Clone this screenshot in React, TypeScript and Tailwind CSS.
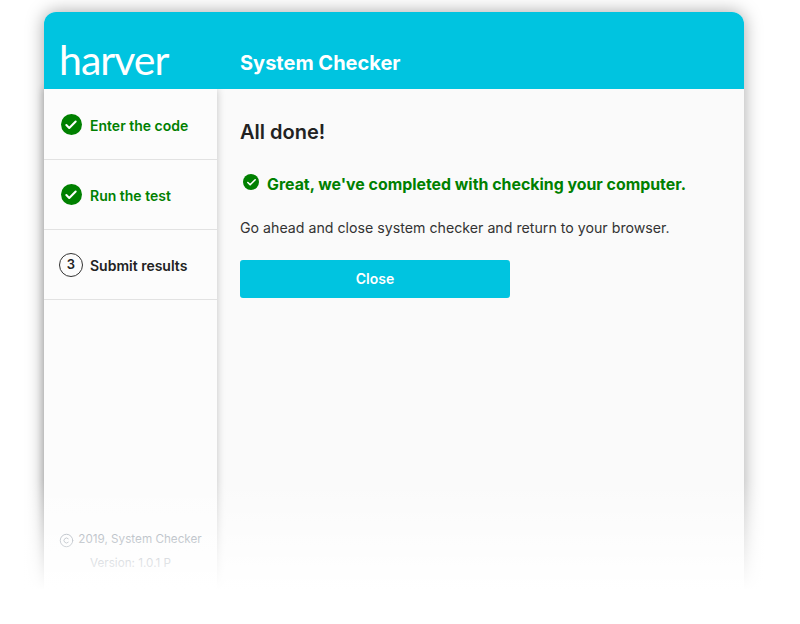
import { Check, Copyright } from "lucide-react";

const FONT = "font-['Inter','Liberation_Sans',sans-serif]";

function DoneIcon({ size }: { size: "lg" | "sm" }) {
  const box = size === "lg" ? "w-[21px] h-[21px]" : "w-4 h-4";
  return (
    <span className={`${box} rounded-full bg-[#008000] flex items-center justify-center shrink-0`}>
      <Check className={size === "lg" ? "w-[14px] h-[14px] text-white" : "w-[11px] h-[11px] text-white"} strokeWidth={3.5} />
    </span>
  );
}

function Step({ label, done, num }: { label: string; done?: boolean; num?: number }) {
  return (
    <div className="h-[70px] flex items-center gap-[7px] pl-[15px] border-b border-[#e2e2e2]">
      <span className="w-[24px] flex justify-center shrink-0">
        {done ? (
          <DoneIcon size="lg" />
        ) : (
          <span className="w-[24px] h-[24px] rounded-full border border-[#333] flex items-center justify-center text-[13px] font-semibold text-[#222]">
            {num}
          </span>
        )}
      </span>
      <span className={`mt-[2px] text-[14px] font-semibold ${done ? "text-[#008000]" : "text-[#222]"}`}>{label}</span>
    </div>
  );
}

export default function App() {
  return (
    <div className={`relative h-[624px] w-[800px] bg-white overflow-hidden pt-3 pl-[44px] pr-[56px] ${FONT}`}>
      <div className="h-[640px] rounded-t-[12px] bg-[#fafafa] shadow-[0_0_18px_rgba(0,0,0,0.35)] flex flex-col">
        {/* Header */}
        <div className="h-[77px] shrink-0 rounded-t-[12px] bg-[#00c4e0] flex items-end relative z-10">
          <div className="w-[173px] pl-[15px] pb-[6px] h-full flex items-end">
            <span className="font-['Lato',sans-serif] font-normal text-[41px] leading-[46px] tracking-[-1px] text-white">harver</span>
          </div>
          <div className="pl-[23px] pb-[13px] text-[20px] leading-[26px] font-bold text-white">System Checker</div>
        </div>

        <div className="flex flex-1">
          {/* Sidebar */}
          <div className="w-[173px] h-[551px] shrink-0 bg-[#fcfcfc] shadow-[0_0_8px_rgba(0,0,0,0.22)] flex flex-col pt-px">
            <Step label="Enter the code" done />
            <Step label="Run the test" done />
            <Step label="Submit results" num={3} />
            <div className="mt-auto pb-[64px] flex flex-col items-center text-[11.7px] text-[#7f8a96]">
              <div className="flex items-center gap-[4px] h-[24px]">
                <Copyright className="w-[15px] h-[15px]" strokeWidth={1.5} />
                <span>2019, System Checker</span>
              </div>
              <div className="h-[24px] flex items-center">Version: 1.0.1 P</div>
            </div>
          </div>

          {/* Content */}
          <div className="flex-1 pl-[23px] pt-[30px]">
            <h1 className="text-[20px] leading-[26px] font-semibold text-[#222]">All done!</h1>
            <div className="mt-[29px] ml-[3px] flex items-start gap-[8px]">
              <DoneIcon size="sm" />
              <p className="text-[15.9px] leading-[22px] font-bold text-[#008000]">Great, we've completed with checking your computer.</p>
            </div>
            <p className="mt-[22px] text-[14.2px] leading-[20px] text-[#333]">Go ahead and close system checker and return to your browser.</p>
            <button className="mt-[22px] w-[270px] h-[38px] pb-[2px] rounded-[3px] bg-[#00c4e0] text-white text-[14px] font-semibold">Close</button>
          </div>
        </div>
      </div>

      {/* Bottom fade over the card */}
      <div className="absolute left-0 right-0 top-[480px] h-[110px] bg-gradient-to-b from-white/0 to-white" />
      <div className="absolute left-0 right-0 top-[590px] bottom-0 bg-white" />
    </div>
  );
}
